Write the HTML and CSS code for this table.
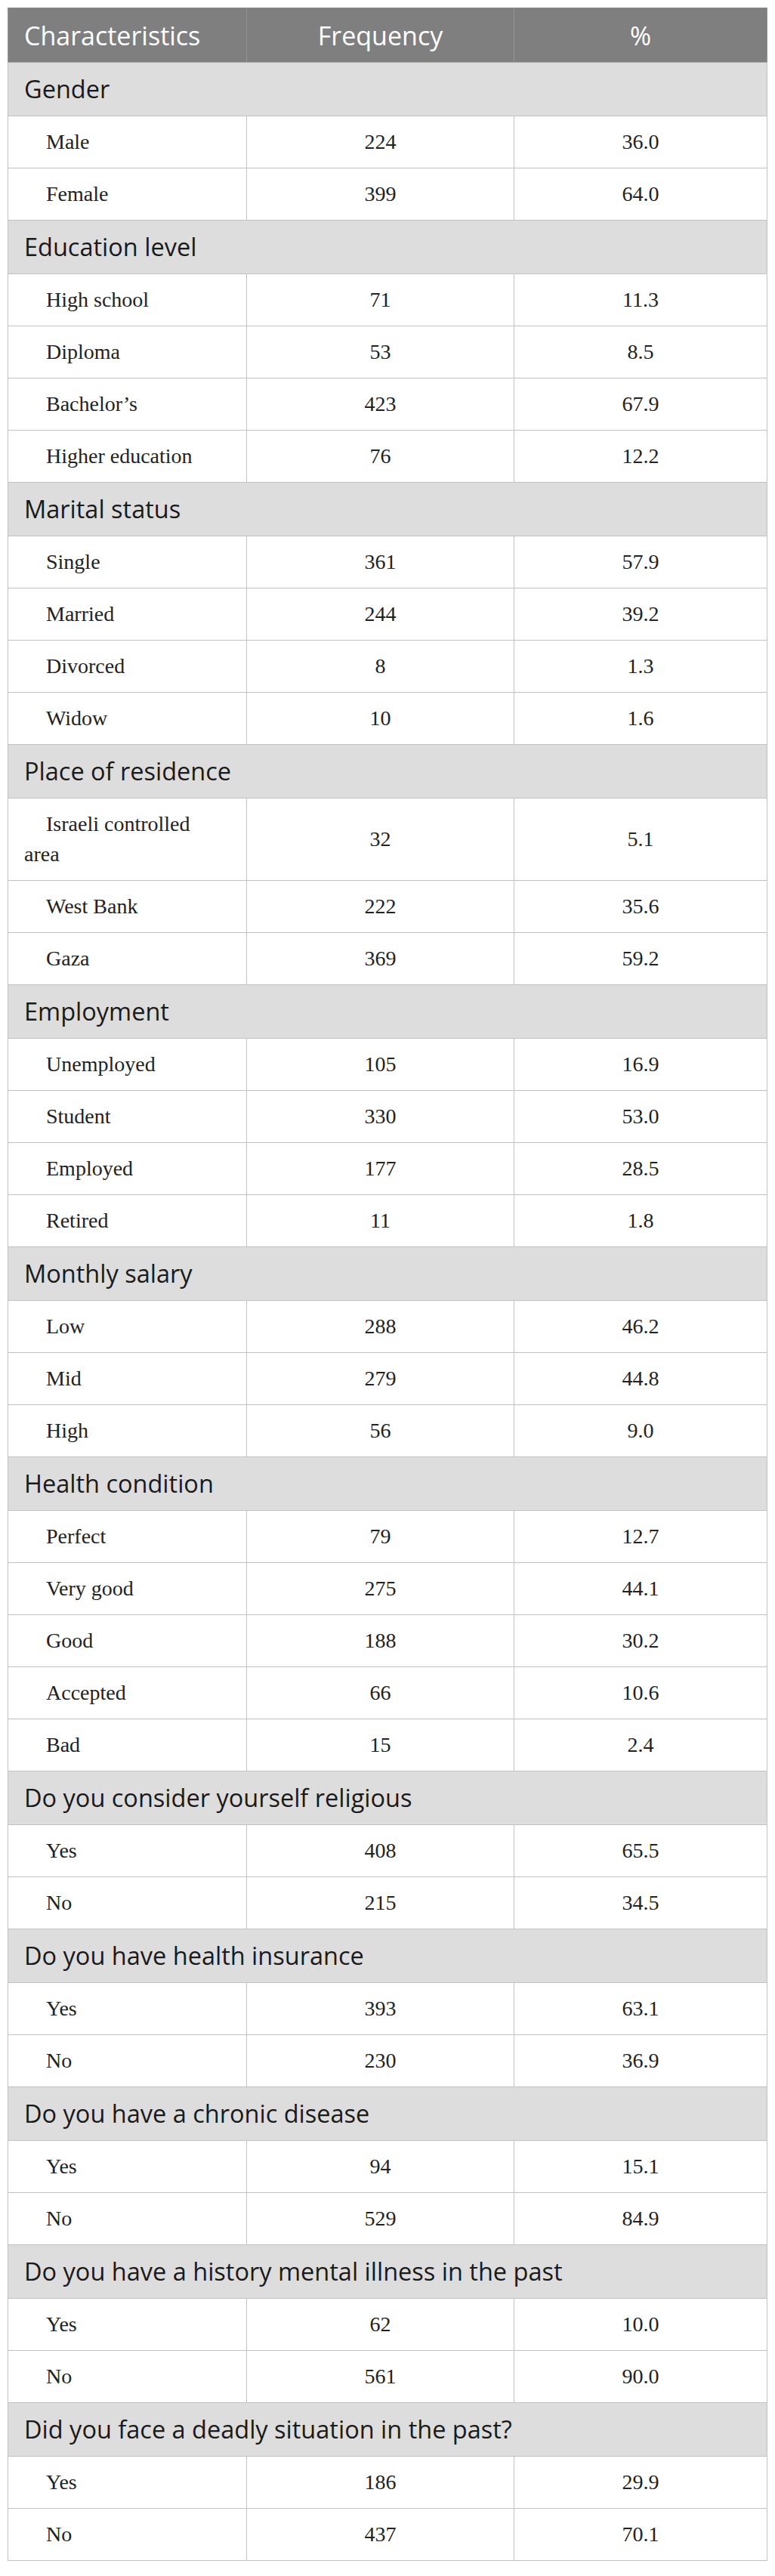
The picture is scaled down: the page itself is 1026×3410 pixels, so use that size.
FILE: index.html
```html
<!DOCTYPE html>
<html lang="en">
<head>
<meta charset="utf-8">
<title>Characteristics</title>
<link rel="stylesheet" href="styles.css">
</head>
<body>
<table class="tbl">
  <colgroup>
    <col class="c1"><col class="c2"><col class="c3">
  </colgroup>
  <thead>
    <tr class="head">
      <th class="left">Characteristics</th>
      <th>Frequency</th>
      <th>%</th>
    </tr>
  </thead>
  <tbody>
    <tr class="grp"><td colspan="3">Gender</td></tr>
    <tr><td class="lbl">Male</td><td>224</td><td>36.0</td></tr>
    <tr><td class="lbl">Female</td><td>399</td><td>64.0</td></tr>

    <tr class="grp"><td colspan="3">Education level</td></tr>
    <tr><td class="lbl">High school</td><td>71</td><td>11.3</td></tr>
    <tr><td class="lbl">Diploma</td><td>53</td><td>8.5</td></tr>
    <tr><td class="lbl">Bachelor’s</td><td>423</td><td>67.9</td></tr>
    <tr><td class="lbl">Higher education</td><td>76</td><td>12.2</td></tr>

    <tr class="grp"><td colspan="3">Marital status</td></tr>
    <tr><td class="lbl">Single</td><td>361</td><td>57.9</td></tr>
    <tr><td class="lbl">Married</td><td>244</td><td>39.2</td></tr>
    <tr><td class="lbl">Divorced</td><td>8</td><td>1.3</td></tr>
    <tr><td class="lbl">Widow</td><td>10</td><td>1.6</td></tr>

    <tr class="grp"><td colspan="3">Place of residence</td></tr>
    <tr><td class="lbl">Israeli controlled area</td><td>32</td><td>5.1</td></tr>
    <tr><td class="lbl">West Bank</td><td>222</td><td>35.6</td></tr>
    <tr><td class="lbl">Gaza</td><td>369</td><td>59.2</td></tr>

    <tr class="grp"><td colspan="3">Employment</td></tr>
    <tr><td class="lbl">Unemployed</td><td>105</td><td>16.9</td></tr>
    <tr><td class="lbl">Student</td><td>330</td><td>53.0</td></tr>
    <tr><td class="lbl">Employed</td><td>177</td><td>28.5</td></tr>
    <tr><td class="lbl">Retired</td><td>11</td><td>1.8</td></tr>

    <tr class="grp"><td colspan="3">Monthly salary</td></tr>
    <tr><td class="lbl">Low</td><td>288</td><td>46.2</td></tr>
    <tr><td class="lbl">Mid</td><td>279</td><td>44.8</td></tr>
    <tr><td class="lbl">High</td><td>56</td><td>9.0</td></tr>

    <tr class="grp"><td colspan="3">Health condition</td></tr>
    <tr><td class="lbl">Perfect</td><td>79</td><td>12.7</td></tr>
    <tr><td class="lbl">Very good</td><td>275</td><td>44.1</td></tr>
    <tr><td class="lbl">Good</td><td>188</td><td>30.2</td></tr>
    <tr><td class="lbl">Accepted</td><td>66</td><td>10.6</td></tr>
    <tr><td class="lbl">Bad</td><td>15</td><td>2.4</td></tr>

    <tr class="grp"><td colspan="3">Do you consider yourself religious</td></tr>
    <tr><td class="lbl">Yes</td><td>408</td><td>65.5</td></tr>
    <tr><td class="lbl">No</td><td>215</td><td>34.5</td></tr>

    <tr class="grp"><td colspan="3">Do you have health insurance</td></tr>
    <tr><td class="lbl">Yes</td><td>393</td><td>63.1</td></tr>
    <tr><td class="lbl">No</td><td>230</td><td>36.9</td></tr>

    <tr class="grp"><td colspan="3">Do you have a chronic disease</td></tr>
    <tr><td class="lbl">Yes</td><td>94</td><td>15.1</td></tr>
    <tr><td class="lbl">No</td><td>529</td><td>84.9</td></tr>

    <tr class="grp"><td colspan="3">Do you have a history mental illness in the past</td></tr>
    <tr><td class="lbl">Yes</td><td>62</td><td>10.0</td></tr>
    <tr><td class="lbl">No</td><td>561</td><td>90.0</td></tr>

    <tr class="grp"><td colspan="3">Did you face a deadly situation in the past?</td></tr>
    <tr><td class="lbl">Yes</td><td>186</td><td>29.9</td></tr>
    <tr><td class="lbl">No</td><td>437</td><td>70.1</td></tr>
  </tbody>
</table>
</body>
</html>
```

FILE: styles.css
```css
html, body {
  background: #ffffff;
}
body {
  margin: 10px;
}
.tbl {
  width: 1005px;
  table-layout: fixed;
  border-collapse: collapse;
  font-family: "Liberation Serif", "Times New Roman", serif;
  color: #222222;
}
.c1 { width: 316px; }
.c2 { width: 354px; }
.c3 { width: 335px; }

.tbl td, .tbl th {
  border: 1px solid #c2c2c2;
}

.head th {
  background: #7f7f7f;
  color: #ffffff;
  font-family: "Open Sans", "Noto Sans", sans-serif;
  font-weight: 400;
  font-size: 34px;
  line-height: 44px;
  height: 72px;
  padding: 0 20px;
  box-sizing: border-box;
  text-align: center;
  vertical-align: middle;
  border-top: 1px solid #8c8c8c;
  border-left: 1px solid #939393;
  border-right: 1px solid #939393;
  border-bottom: 1px solid #a6a6a6;
}
.head th.left {
  text-align: left;
  padding-left: 21px;
}

.grp td {
  background: #dddddd;
  color: #1a1a1a;
  font-family: "Open Sans", "Noto Sans", sans-serif;
  font-size: 32.5px;
  line-height: 40px;
  height: 71px;
  padding: 0 21px;
  box-sizing: border-box;
  vertical-align: middle;
  text-align: left;
}

.tbl tbody tr:not(.grp) td {
  font-size: 28px;
  line-height: 40px;
  padding: 14px 20px;
  text-align: center;
  vertical-align: middle;
}
.tbl tbody tr:not(.grp) td.lbl {
  text-align: left;
  padding-left: 21px;
  padding-right: 26px;
  text-indent: 29px;
}
```
